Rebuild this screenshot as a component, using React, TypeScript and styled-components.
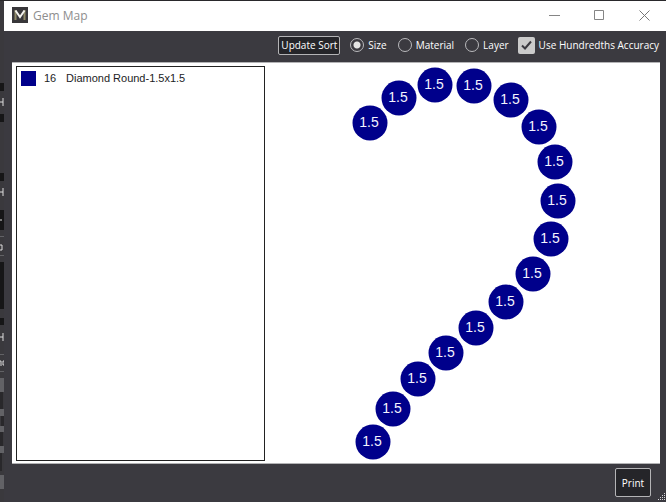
import React, { useState } from "react";
import styled, { createGlobalStyle } from "styled-components";

const GlobalStyle = createGlobalStyle`
  * { box-sizing: border-box; }
  body { margin: 0; background: #3b3a40; }
`;

const uiFont = `"Open Sans", "Noto Sans", sans-serif`;
const drawingFont = `"Liberation Sans", Arial, sans-serif`;

const Desktop = styled.div`
  display: flex;
  height: 100vh;
  padding-top: 1px;
  background: #29282b;
  font-family: ${uiFont};
  overflow: hidden;
`;

const Backdrop = styled.svg`
  display: block;
  flex: none;
  width: 4px;
  height: 100%;
`;

const Window = styled.main`
  display: flex;
  flex: 1;
  flex-direction: column;
  min-width: 0;
  background: #3b3a40;
`;

const TitleBar = styled.header`
  display: flex;
  flex: none;
  align-items: center;
  height: 30px;
  padding: 0 0 2px 8px;
  background: #fff;
`;

const Title = styled.h1`
  flex: 1;
  margin: 0 0 0 5px;
  padding-top: 2px;
  color: #8e8e8e;
  font-size: 12px;
  font-weight: 400;
  line-height: 16px;
`;

const CaptionButtons = styled.div`
  display: flex;
  margin-right: -1px;
`;

const CaptionButton = styled.button`
  display: grid;
  place-items: center;
  width: 45px;
  height: 28px;
  padding: 0;
  border: 0;
  background: transparent;
`;

const Toolbar = styled.div`
  display: flex;
  flex: none;
  align-items: center;
  justify-content: flex-end;
  height: 31px;
  padding: 0 7px 3px 0;
  color: #fff;
  font-size: 10px;
  font-weight: 400;
  line-height: 14px;
`;

const Button = styled.button<{ $large?: boolean }>`
  width: ${(p) => (p.$large ? "36px" : "62px")};
  height: ${(p) => (p.$large ? "29px" : "19px")};
  padding: 0;
  border: 1px solid #b4b4b6;
  border-radius: 2px;
  background: #252529;
  color: #fff;
  font-family: inherit;
  font-size: 10px;
  font-weight: 400;
  line-height: 14px;
  white-space: nowrap;
`;

const Options = styled.div`
  display: flex;
  gap: 11px;
  margin: 0 9px 0 10px;
`;

const Choice = styled.label`
  display: flex;
  align-items: center;
  gap: 4px;
  white-space: nowrap;
`;

const Radio = styled.input`
  appearance: none;
  width: 14px;
  height: 14px;
  margin: 0;
  border: 1px solid #b9b9bc;
  border-radius: 50%;
  &:checked {
    background: radial-gradient(circle, #e4e4e4 3px, transparent 4px);
  }
`;

const CheckWrap = styled.span`
  display: grid;
  place-items: center;
  & > * { grid-area: 1 / 1; }
  & > svg { pointer-events: none; }
`;

const Checkbox = styled.input`
  appearance: none;
  width: 17px;
  height: 17px;
  margin: 0;
  border-radius: 2px;
  background: #cbcbcb;
`;

const Sheet = styled.section`
  display: flex;
  flex: 1;
  min-height: 0;
  margin: 0 6px 0 8px;
  padding: 3px 0 2px 4px;
  border: solid #b3b3b5;
  border-width: 1px 0;
  background: #fff;
`;

const Legend = styled.ul`
  flex: none;
  width: 249px;
  margin: 0;
  padding: 4px;
  border: 1px solid #222;
  font-family: ${drawingFont};
  font-size: 11px;
  line-height: 15px;
  color: #1c1c24;
  list-style: none;
`;

const LegendRow = styled.li`
  display: flex;
  align-items: center;
`;

const Swatch = styled.span`
  width: 15px;
  height: 15px;
  background: #00008b;
`;

const Count = styled.span`
  width: 22px;
  margin-left: 8px;
`;

const Drawing = styled.svg`
  display: block;
  flex: 1;
  min-width: 0;
  height: 100%;
  font-family: ${drawingFont};
  font-size: 14px;
`;

const Footer = styled.footer`
  display: flex;
  flex: none;
  align-items: flex-end;
  justify-content: flex-end;
  height: 38px;
`;

const PrintSlot = styled.div`
  margin: 0 6px 5px 0;
  height: 29px;
`;

const Grip = styled.svg`
  flex: none;
  width: 9px;
  height: 10px;
`;

const gems: [number, number][] = [
  [105, 57], [134, 32], [170, 19], [209, 20], [246, 34], [274, 61],
  [290, 96], [293, 135], [286, 173], [268, 208], [241, 236], [211, 262],
  [181, 287], [153, 313], [128, 343], [108, 376],
];

const gripDots = [[7, 1], [5, 3], [7, 3], [3, 5], [5, 5], [7, 5], [1, 7], [3, 7], [5, 7], [7, 7]];

function DesktopEdge() {
  return (
    <Backdrop viewBox="0 0 4 501" preserveAspectRatio="none" aria-hidden="true">
      <path fill="#3a393d" d="M0 0h4v501H0z" />
      <path fill="#161617" d="M0 82h4v8H0zM0 113h4v8H0zM0 172h4v8H0zM0 209h4v20H0zM0 261h4v47H0zM0 317h4v7H0z" />
      <path fill="#626266" d="M0 235h4v1H0zM0 254h4v1H0zM0 353h4v1H0zM0 370h4v1H0zM0 377h4v14H0zM0 408h4v7H0zM0 425h4v6H0zM0 445h4v7H0zM0 474h4v14H0z" />
      <path fill="none" stroke="#dededf" d="M0 101h3M3 97v8M0 191h3M3 187v8M0 336h3M3 332v8M0 244h2v5H0M0 360h1v5M4 360H3v4h1M0 219h2" />
      <path fill="#29282b" d="M0 391h3v17H0zM1 415h3v10H1zM0 431h3v14H0zM0 452h2v18H0z" />
    </Backdrop>
  );
}

function Logo() {
  return (
    <svg width="16" height="16" viewBox="0 0 16 16" aria-hidden="true">
      <rect width="16" height="16" fill="#38373a" />
      <path d="M3.5 3v10M12.5 3v10" stroke="#8f8a68" strokeWidth="2" fill="none" />
      <path d="M3.5 3.5L8 10l4.5-6.5" stroke="#f4f3ee" strokeWidth="2" fill="none" />
    </svg>
  );
}

export default function App() {
  const [sort, setSort] = useState("Size");
  const [hundredths, setHundredths] = useState(true);

  return (
    <>
      <GlobalStyle />
      <Desktop>
        <DesktopEdge />
        <Window>
          <TitleBar>
            <Logo />
            <Title>Gem Map</Title>
            <CaptionButtons>
              <CaptionButton aria-label="Minimize">
                <svg width="11" height="11" stroke="#858585"><path d="M0 5.5h11" /></svg>
              </CaptionButton>
              <CaptionButton aria-label="Maximize">
                <svg width="11" height="11" fill="none" stroke="#858585"><path d="M.5.5h9v9h-9z" /></svg>
              </CaptionButton>
              <CaptionButton aria-label="Close">
                <svg width="11" height="11" stroke="#777"><path d="M.5.5l10 10M10.5.5l-10 10" /></svg>
              </CaptionButton>
            </CaptionButtons>
          </TitleBar>

          <Toolbar>
            <Button type="button">Update Sort</Button>
            <Options role="radiogroup" aria-label="Sort by">
              {["Size", "Material", "Layer"].map((name) => (
                <Choice key={name}>
                  <Radio type="radio" name="sort" checked={sort === name} onChange={() => setSort(name)} />
                  {name}
                </Choice>
              ))}
            </Options>
            <Choice>
              <CheckWrap>
                <Checkbox type="checkbox" checked={hundredths} onChange={(e) => setHundredths(e.target.checked)} />
                {hundredths && (
                  <svg width="17" height="17" fill="none" stroke="#3b3a40" strokeWidth="2" aria-hidden="true">
                    <path d="M4 8.5l3 3 6-7" />
                  </svg>
                )}
              </CheckWrap>
              Use Hundredths Accuracy
            </Choice>
          </Toolbar>

          <Sheet>
            <Legend>
              <LegendRow>
                <Swatch />
                <Count>16</Count>
                <span>Diamond Round-1.5x1.5</span>
              </LegendRow>
            </Legend>
            <Drawing role="img" aria-label="Gem layout">
              {gems.map(([x, y]) => (
                <g key={`${x}-${y}`}>
                  <circle cx={x} cy={y} r="17.5" fill="#00008b" />
                  <text x={x - 1} y={y + 4} fill="#f4f4ff" textAnchor="middle">1.5</text>
                </g>
              ))}
            </Drawing>
          </Sheet>

          <Footer>
            <PrintSlot>
              <Button type="button" $large>Print</Button>
            </PrintSlot>
            <Grip viewBox="0 0 9 10" aria-hidden="true">
              {gripDots.map(([x, y]) => (
                <rect key={`${x}-${y}`} x={x} y={y} width="1" height="1" fill="#d5d5d8" />
              ))}
            </Grip>
          </Footer>
        </Window>
      </Desktop>
    </>
  );
}
